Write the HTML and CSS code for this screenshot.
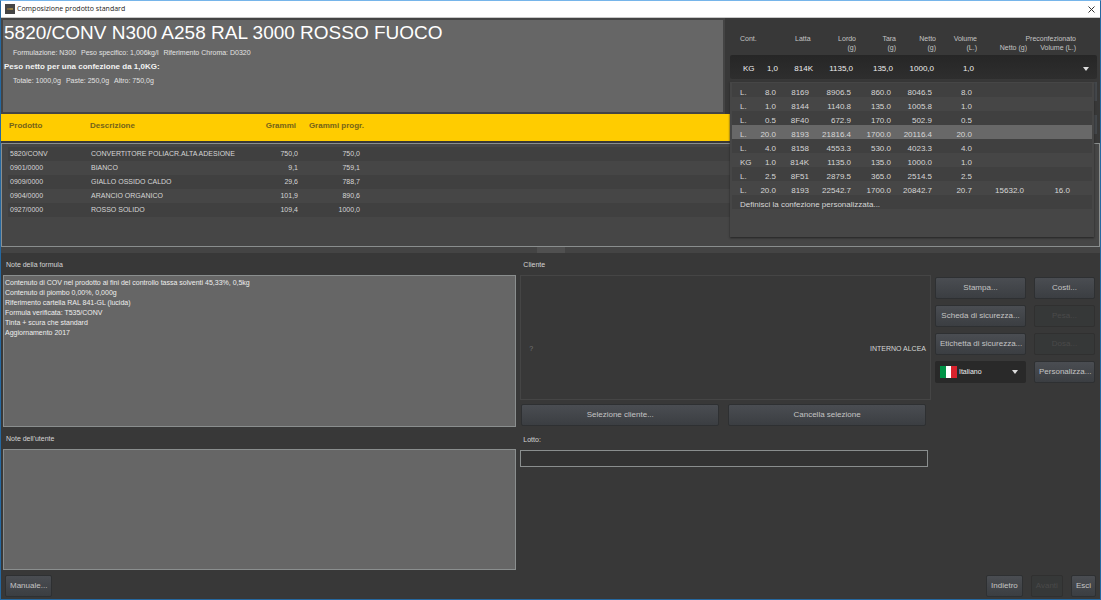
FILE: index.html
```html
<!DOCTYPE html>
<html lang="it">
<head>
<meta charset="utf-8">
<title>Composizione prodotto standard</title>
<link rel="stylesheet" href="styles.css">
</head>
<body>
<div class="window">
  <header class="titlebar">
    <svg class="app-icon" width="10" height="10" viewBox="0 0 10 10" aria-hidden="true"><rect width="10" height="10" fill="#454545"/><path d="M2 5h2.500" stroke="#b08a3c"/><path d="M4.500 5h3.500" stroke="#e8bc3c"/></svg>
    <h1 class="window-title">Composizione prodotto standard</h1>
    <button class="close" type="button" aria-label="Chiudi"><svg width="7" height="7" viewBox="0 0 7 7"><path d="M.5.5l6 6M6.500.5l-6 6" stroke="#333" fill="none"/></svg></button>
  </header>

  <section class="upper">
    <div class="summary-column">
      <div class="summary">
        <h2 class="product">5820/CONV N300 A258 RAL 3000 ROSSO FUOCO</h2>
        <p class="detail"><span>Formulazione: N300</span><span>Peso specifico: 1,006kg/l</span><span>Riferimento Chroma: D0320</span></p>
        <p class="net">Peso netto per una confezione da 1,0KG:</p>
        <p class="detail"><span>Totale: 1000,0g</span><span>Paste: 250,0g</span><span>Altro: 750,0g</span></p>
      </div>
      <div class="formula-head">
        <span>Prodotto</span><span>Descrizione</span><span class="num">Grammi</span><span class="num">Grammi progr.</span>
      </div>
    </div>
    <div class="pack-column">
      <div class="pack-head">
        <span>Cont.</span><span>Latta</span><span>Lordo<br>(g)</span><span>Tara<br>(g)</span><span>Netto<br>(g)</span><span>Volume<br>(L.)</span>
        <span class="prepack"><span class="prepack-title">Preconfezionato</span><span>Netto (g)</span><span>Volume (L.)</span></span>
      </div>
      <button class="pack-combo" type="button" role="combobox" aria-label="Confezione" aria-haspopup="listbox" aria-expanded="true" aria-controls="pack-list">
        <span class="unit-cell"><span>KG</span><span>1,0</span></span><span>814K</span><span>1135,0</span><span>135,0</span><span>1000,0</span><span>1,0</span>
        <svg class="arrow" width="6" height="4" viewBox="0 0 6 4"><path d="M0 0h6L3 4z" fill="#ddd"/></svg>
      </button>
      <div class="side-edges"><i></i><i></i></div>
      <div class="pack-popup" id="pack-list">
        <table class="pack-table">
          <colgroup><col class="c-unit"><col class="c-qty"><col class="c-can"><col class="c-gross"><col class="c-tare"><col class="c-net"><col class="c-vol"><col class="c-pnet"><col class="c-pvol"><col></colgroup>
          <tbody>
          <tr><td>L.</td><td>8.0</td><td>8169</td><td>8906.5</td><td>860.0</td><td>8046.5</td><td>8.0</td><td></td><td></td><td></td></tr>
          <tr><td>L.</td><td>1.0</td><td>8144</td><td>1140.8</td><td>135.0</td><td>1005.8</td><td>1.0</td><td></td><td></td><td></td></tr>
          <tr><td>L.</td><td>0.5</td><td>8F40</td><td>672.9</td><td>170.0</td><td>502.9</td><td>0.5</td><td></td><td></td><td></td></tr>
          <tr class="selected"><td>L.</td><td>20.0</td><td>8193</td><td>21816.4</td><td>1700.0</td><td>20116.4</td><td>20.0</td><td></td><td></td><td></td></tr>
          <tr><td>L.</td><td>4.0</td><td>8158</td><td>4553.3</td><td>530.0</td><td>4023.3</td><td>4.0</td><td></td><td></td><td></td></tr>
          <tr><td>KG</td><td>1.0</td><td>814K</td><td>1135.0</td><td>135.0</td><td>1000.0</td><td>1.0</td><td></td><td></td><td></td></tr>
          <tr><td>L.</td><td>2.5</td><td>8F51</td><td>2879.5</td><td>365.0</td><td>2514.5</td><td>2.5</td><td></td><td></td><td></td></tr>
          <tr><td>L.</td><td>20.0</td><td>8193</td><td>22542.7</td><td>1700.0</td><td>20842.7</td><td>20.7</td><td>15632.0</td><td>16.0</td><td></td></tr>
          <tr><td colspan="10">Definisci la confezione personalizzata...</td></tr>
          </tbody>
        </table>
      </div>
    </div>
  </section>

  <section class="formula">
    <table class="formula-table">
      <colgroup><col class="f-code"><col class="f-name"><col class="f-grams"><col class="f-total"><col></colgroup>
      <tbody>
      <tr><td>5820/CONV</td><td>CONVERTITORE POLIACR.ALTA ADESIONE</td><td class="num">750,0</td><td class="num">750,0</td><td></td></tr>
      <tr><td>0901/0000</td><td>BIANCO</td><td class="num">9,1</td><td class="num">759,1</td><td></td></tr>
      <tr><td>0909/0000</td><td>GIALLO OSSIDO CALDO</td><td class="num">29,6</td><td class="num">788,7</td><td></td></tr>
      <tr><td>0904/0000</td><td>ARANCIO ORGANICO</td><td class="num">101,9</td><td class="num">890,6</td><td></td></tr>
      <tr><td>0927/0000</td><td>ROSSO SOLIDO</td><td class="num">109,4</td><td class="num">1000,0</td><td></td></tr>
      </tbody>
    </table>
  </section>
  <div class="splitter"><span class="grip"></span></div>

  <main class="lower">
    <div class="notes">
      <label class="label" for="formula-notes">Note della formula</label>
      <textarea class="note note-formula" id="formula-notes">Contenuto di COV nel prodotto ai fini del controllo tassa solventi 45,33%, 0,5kg
Contenuto di piombo 0,00%, 0,000g
Riferimento cartella RAL 841-GL (lucida)
Formula verificata: T535/CONV
Tinta + scura che standard
Aggiornamento 2017</textarea>
      <label class="label" for="user-notes">Note dell'utente</label>
      <textarea class="note note-user" id="user-notes"></textarea>
    </div>
    <div class="customer">
      <h3 class="label">Cliente</h3>
      <div class="customer-box"><span class="unknown">?</span><span>INTERNO ALCEA</span></div>
      <div class="customer-actions">
        <button class="btn" type="button">Selezione cliente...</button>
        <button class="btn" type="button">Cancella selezione</button>
      </div>
      <label class="label" for="lot">Lotto:</label>
      <input class="lot" id="lot" type="text">
    </div>
    <div class="actions">
      <button class="btn" type="button">Stampa...</button>
      <button class="btn" type="button">Costi...</button>
      <button class="btn" type="button">Scheda di sicurezza...</button>
      <button class="btn" type="button" disabled>Pesa...</button>
      <button class="btn" type="button">Etichetta di sicurezza...</button>
      <button class="btn" type="button" disabled>Dosa...</button>
      <div class="language">
        <svg width="17" height="12" viewBox="0 0 17 12" aria-hidden="true"><path fill="#009246" d="M0 0h6v12H0z"/><path fill="#fff" d="M6 0h5v12H6z"/><path fill="#d8232e" d="M11 0h6v12h-6z"/></svg>
        <select class="language-select" aria-label="Lingua"><option>Italiano</option></select>
        <svg class="arrow" width="6" height="4" viewBox="0 0 6 4" aria-hidden="true"><path d="M0 0h6L3 4z" fill="#ddd"/></svg>
      </div>
      <button class="btn" type="button">Personalizza...</button>
    </div>
  </main>

  <footer class="footer">
    <button class="btn" type="button">Manuale...</button>
    <span class="spacer"></span>
    <button class="btn" type="button">Indietro</button>
    <button class="btn" type="button" disabled>Avanti</button>
    <button class="btn" type="button">Esci</button>
  </footer>
</div>
</body>
</html>
```
FILE: styles.css
```css
* { box-sizing: border-box; }
body { margin: 0; background: #383838; }
h1, h2, h3, p { margin: 0; font-weight: normal; }
button, input, select, textarea { font: inherit; color: inherit; margin: 0; }

.window {
  display: flex;
  flex-direction: column;
  min-height: 100vh;
  border: 1px solid #2568a0;
  border-top-color: #76b5ea;
  font: 7px/10px "Liberation Sans", Arial, sans-serif;
  color: #d6d6d6;
}

/* Title bar */
.titlebar {
  display: flex;
  align-items: center;
  gap: 2px;
  height: 17px;
  padding: 0 5px 0 4px;
  background: #fff;
  border-bottom: 1px solid #c8c8c8;
  color: #222;
}
.window-title { flex: 1; font: 7px/10px "Open Sans", "Noto Sans", sans-serif; }
.close { display: flex; padding: 0; border: 0; background: none; }

/* Upper section */
.upper { display: flex; background: #383838; }
.summary-column { flex: 1; display: flex; flex-direction: column; }
.summary {
  height: 96px;
  margin-right: 5px;
  padding: 1px 0 0 1px;
  background: #666;
  border: 2px solid #444;
}
.product { margin-bottom: 1px; font-size: 19px; line-height: 24px; color: #fff; }
.summary p { line-height: 14px; }
.summary .detail { display: flex; gap: 5px; padding-left: 9px; color: #e2e2e2; }
.net { font-size: 8px; font-weight: bold; color: #f2f2f2; }
.formula-head {
  display: grid;
  grid-template-columns: 81px 150px 56px 68px;
  padding: 6px 8px;
  height: 27px;
  line-height: 12px;
  background: #fc0;
  color: #75631a;
  font-size: 8px;
  font-weight: bold;
}
.num { text-align: right; }

/* Packaging selector */
.pack-column { position: relative; width: 370px; padding-right: 3px; }
.pack-head {
  display: grid;
  grid-template-columns: 55px 17px 44px 40px 40px 41px 99px;
  align-items: start;
  height: 37px;
  padding: 16px 0 0 10px;
  line-height: 9px;
  color: #c4c4c4;
  text-align: right;
}
.pack-head > :nth-child(-n+2) { text-align: left; }
.prepack { display: grid; grid-template-columns: 50px 49px; }
.prepack-title { grid-column: 1 / 3; }
.pack-combo {
  display: grid;
  grid-template-columns: 35px 35px 40px 40px 41px 40px 1fr;
  align-items: center;
  width: 100%;
  height: 24px;
  padding: 4px 8px 0 13px;
  border: 0;
  border-radius: 2px;
  background: linear-gradient(#262626, #2e2e2e);
  color: #eee;
  font-size: 8px;
  text-align: right;
}
.unit-cell { display: flex; justify-content: space-between; }
.arrow { justify-self: end; }
.side-edges {
  display: flex;
  flex-direction: column;
  align-items: flex-end;
  gap: 14px;
  padding-top: 3px;
}
.side-edges i { width: 6px; height: 19px; background: #44484c; }
.pack-popup {
  position: absolute;
  top: 64px;
  left: 0;
  right: 6px;
  z-index: 1;
  padding: 1px 2px 28px;
  background: #464646;
  box-shadow: 0 1px 2px #222;
}
.pack-table { width: 100%; table-layout: fixed; border-collapse: collapse; font-size: 8px; }
.pack-table tr:nth-child(odd) { background: #404040; }
.pack-table tr.selected { background: #686868; }
.pack-table td { height: 14px; padding: 6px 0 0; line-height: 8px; text-align: right; white-space: nowrap; }
.pack-table td:first-child { padding-left: 8px; text-align: left; }
.c-unit { width: 22px; }
.c-qty { width: 22px; }
.c-can { width: 33px; }
.c-gross { width: 42px; }
.c-tare { width: 40px; }
.c-net { width: 41px; }
.c-vol { width: 40px; }
.c-pnet { width: 52px; }
.c-pvol { width: 46px; }

/* Formula rows */
.formula {
  height: 104px;
  margin-top: 2px;
  padding: 3px 6px;
  background: #464646;
  border: 1px solid #8a8e8e;
}
.formula-table { width: 100%; table-layout: fixed; border-collapse: collapse; }
.formula-table tr:nth-child(odd) { background: #404040; }
.formula-table td { height: 14px; padding: 0; line-height: 10px; white-space: nowrap; }
.formula-table td:first-child { padding-left: 2px; }
.f-code { width: 83px; }
.f-name { width: 150px; }
.f-grams { width: 57px; }
.f-total { width: 62px; }
.splitter { display: flex; justify-content: center; height: 6px; background: #444; }
.grip { width: 28px; background: #505050; }

/* Notes, customer and actions */
.lower {
  flex: 1;
  display: grid;
  grid-template-columns: 5fr 4fr 160px;
  column-gap: 4px;
  padding: 0 5px 0 2px;
}
.notes, .customer { display: flex; flex-direction: column; }
.label { height: 22px; padding-left: 3px; font-size: 7px; line-height: 23px; }
.note {
  width: 100%;
  padding: 2px 1px;
  background: #666;
  border: 1px solid #8a8e8e;
  border-radius: 0;
  color: #eee;
  resize: none;
}
.note-formula { flex: 153 1 0; }
.note-user { flex: 120 1 0; }
.customer-box {
  display: flex;
  justify-content: space-between;
  align-items: center;
  height: 125px;
  padding: 22px 4px 0 8px;
  border: 1px solid #454545;
}
.unknown { color: #777; }
.customer-actions { display: grid; grid-template-columns: 1fr 1fr; gap: 9px; padding: 4px 5px 2px 1px; }
.btn {
  height: 22px;
  padding: 0 4px;
  border: 1px solid #2e3032;
  border-radius: 2px;
  background: linear-gradient(#4a4d52, #3b3e42);
  color: #c4c4c4;
  font-size: 8px;
  white-space: nowrap;
}
.btn:disabled { background: #363838; border-color: #303030; color: #4a4a4a; }
.lot { height: 17px; margin-right: 3px; padding: 0 2px; background: #333; border: 1px solid #8a8e8e; }
.actions {
  display: grid;
  grid-template-columns: 91px 61px;
  grid-auto-rows: 22px;
  gap: 6px 8px;
  align-content: start;
  padding-top: 24px;
}
.language {
  display: flex;
  align-items: center;
  gap: 2px;
  padding: 0 8px 0 5px;
  border-radius: 2px;
  background: #292929;
  color: #eee;
}
.language-select { flex: 1; min-width: 0; padding: 0; border: 0; background: none; appearance: none; }

.footer { display: flex; gap: 8px; padding: 5px 4px 2px; }
.spacer { flex: 1; }
```
